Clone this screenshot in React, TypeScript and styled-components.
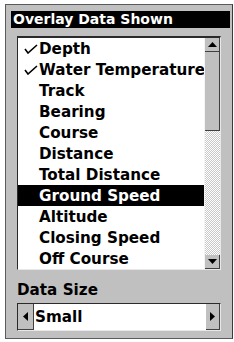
import React from "react";
import styled, { createGlobalStyle } from "styled-components";

const GlobalStyle = createGlobalStyle`
  html, body {
    margin: 0;
    padding: 0;
    background: #ffffff;
  }
  body {
    font-family: "DejaVu Sans", "Liberation Sans", sans-serif;
    font-weight: bold;
    color: #000;
  }
`;

const Frame = styled.div`
  box-sizing: border-box;
  width: 228px;
  height: 335px;
  margin: 4px 0 0 5px;
  border: 1px solid #5a5a5a;
  border-right-color: #3a3a3a;
  background: #c0c0c0;
  padding: 6px 2px 0 5px;
  display: flex;
  flex-direction: column;
`;

const TitleBar = styled.div`
  height: 17px;
  background: #000;
  color: #fff;
  font-size: 14px;
  line-height: 17px;
  padding-left: 2px;
  white-space: nowrap;
`;

const Body = styled.div`
  padding-left: 6px;
  width: 204px;
  display: flex;
  flex-direction: column;
`;

const ListBox = styled.div`
  box-sizing: border-box;
  margin-top: 8px;
  height: 234px;
  border: 1px solid #2a2a2a;
  border-top-width: 2px;
  border-right-color: #e8e8e8;
  border-bottom-color: #e8e8e8;
  background: #fff;
  display: flex;
`;

const Items = styled.div`
  flex: 1;
  overflow: hidden;
`;

const Row = styled.div<{ $selected?: boolean }>`
  height: 21px;
  display: flex;
  align-items: center;
  white-space: nowrap;
  font-size: 15.2px;
  background: ${(p) => (p.$selected ? "#000" : "transparent")};
  color: ${(p) => (p.$selected ? "#fff" : "#000")};
`;

const CheckCell = styled.span`
  width: 20px;
  flex: none;
  display: flex;
  align-items: center;
  justify-content: flex-end;
  padding-right: 1px;
`;

const Scrollbar = styled.div`
  width: 15px;
  flex: none;
  display: flex;
  flex-direction: column;
  border-left: 1px solid #f4f4f4;
`;

const ScrollButton = styled.div`
  box-sizing: border-box;
  height: 14px;
  background: #c0c0c0;
  border-right: 1px solid #404040;
  border-bottom: 1px solid #404040;
  display: flex;
  align-items: center;
  justify-content: center;
`;

const Thumb = styled.div`
  box-sizing: border-box;
  height: 79px;
  background: #c0c0c0;
  border-right: 1px solid #404040;
  border-bottom: 1px solid #404040;
`;

const Track = styled.div`
  flex: 1;
  background-color: #fff;
  background-image: repeating-conic-gradient(#c8c8c8 0% 25%, #ffffff 0% 50%);
  background-size: 2px 2px;
`;

const Label = styled.div`
  margin-top: 11px;
  font-size: 15.2px;
  line-height: 18px;
  height: 18px;
`;

const SelectBox = styled.div`
  box-sizing: border-box;
  margin-top: 4px;
  height: 28px;
  border: 1px solid #2a2a2a;
  border-right-color: #e8e8e8;
  border-bottom-color: #e8e8e8;
  background: #fff;
  display: flex;
  align-items: stretch;
`;

const ArrowButton = styled.div<{ $wide?: boolean }>`
  box-sizing: border-box;
  width: ${(p) => (p.$wide ? "16px" : "14px")};
  background: #c0c0c0;
  border-right: 1px solid #404040;
  border-bottom: 1px solid #404040;
  display: flex;
  align-items: center;
  justify-content: center;
`;

const SelectValue = styled.div`
  flex: 1;
  display: flex;
  align-items: center;
  padding-left: 1px;
  font-size: 15.2px;
`;

const Check = () => (
  <svg width="14" height="10" viewBox="0 0 14 10">
    <polyline points="1,5 4,9 13,1" fill="none" stroke="currentColor" strokeWidth="1.6" />
  </svg>
);

const Tri = ({ dir }: { dir: "up" | "down" | "left" | "right" }) => {
  const pts = {
    up: "0,5 4.5,0 9,5",
    down: "0,0 9,0 4.5,5",
    left: "5,0 5,9 0,4.5",
    right: "0,0 0,9 5,4.5",
  }[dir];
  const vertical = dir === "up" || dir === "down";
  return (
    <svg width={vertical ? 9 : 5} height={vertical ? 5 : 9} viewBox={vertical ? "0 0 9 5" : "0 0 5 9"}>
      <polygon points={pts} fill="#000" />
    </svg>
  );
};

const items = [
  { name: "Depth", checked: true },
  { name: "Water Temperature", checked: true },
  { name: "Track" },
  { name: "Bearing" },
  { name: "Course" },
  { name: "Distance" },
  { name: "Total Distance" },
  { name: "Ground Speed", selected: true },
  { name: "Altitude" },
  { name: "Closing Speed" },
  { name: "Off Course" },
];

const App = () => (
  <>
    <GlobalStyle />
    <Frame>
      <TitleBar>Overlay Data Shown</TitleBar>
      <Body>
        <ListBox>
          <Items>
            {items.map((item) => (
              <Row key={item.name} $selected={item.selected}>
                <CheckCell>{item.checked ? <Check /> : null}</CheckCell>
                {item.name}
              </Row>
            ))}
          </Items>
          <Scrollbar>
            <ScrollButton>
              <Tri dir="up" />
            </ScrollButton>
            <Thumb />
            <Track />
            <ScrollButton>
              <Tri dir="down" />
            </ScrollButton>
          </Scrollbar>
        </ListBox>
        <Label>Data Size</Label>
        <SelectBox>
          <ArrowButton $wide>
            <Tri dir="left" />
          </ArrowButton>
          <SelectValue>Small</SelectValue>
          <ArrowButton>
            <Tri dir="right" />
          </ArrowButton>
        </SelectBox>
      </Body>
    </Frame>
  </>
);

export default App;
